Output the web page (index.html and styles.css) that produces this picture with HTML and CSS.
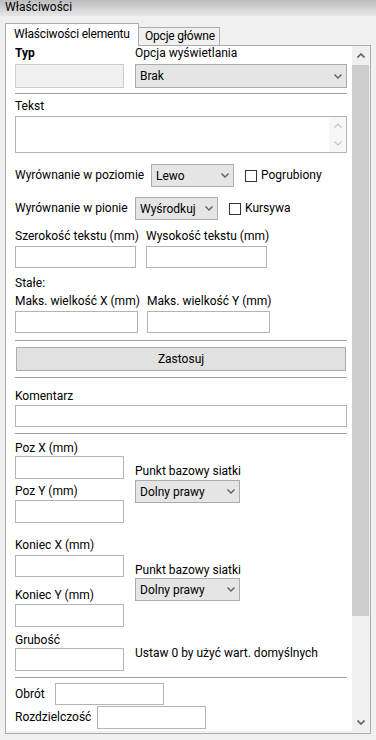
FILE: index.html
```html
<!DOCTYPE html>
<html lang="pl">
<head>
    <meta charset="UTF-8">
    <meta name="viewport" content="width=device-width, initial-scale=1.0">
    <title>Właściwości</title>
    <link rel="stylesheet" href="styles.css">
</head>
<body>
    <div class="titlebar">Właściwości</div>

    <div class="tabs">
        <div class="tab active">Właściwości elementu</div>
        <div class="tab">Opcje główne</div>
    </div>

    <div class="panel">
        <div class="content">
            <div class="grid-top">
                <div class="lbl bold">Typ</div>
                <div class="lbl">Opcja wyświetlania</div>
                <div class="field disabled h24"></div>
                <div class="combo h24">
                    <span>Brak</span>
                    <svg class="chev" width="8" height="5" viewBox="0 0 8 5"><polyline points="0.5,0.5 4,4 7.5,0.5" fill="none" stroke="#606060" stroke-width="1.4"/></svg>
                </div>
            </div>

            <div class="sep s5"></div>

            <div class="lbl mt5">Tekst</div>
            <div class="textarea mt2">
                <div class="mini-scroll">
                    <svg width="8" height="5" viewBox="0 0 8 5"><polyline points="0.5,4.5 4,1 7.5,4.5" fill="none" stroke="#c4c4c4" stroke-width="1.2"/></svg>
                    <svg width="8" height="5" viewBox="0 0 8 5"><polyline points="0.5,0.5 4,4 7.5,0.5" fill="none" stroke="#c4c4c4" stroke-width="1.2"/></svg>
                </div>
            </div>

            <div class="row mt11">
                <div class="lbl w136">Wyrównanie w poziomie</div>
                <div class="combo h23 w83">
                    <span>Lewo</span>
                    <svg class="chev" width="8" height="5" viewBox="0 0 8 5"><polyline points="0.5,0.5 4,4 7.5,0.5" fill="none" stroke="#606060" stroke-width="1.4"/></svg>
                </div>
                <span class="check"></span>
                <span class="check-lbl">Pogrubiony</span>
            </div>

            <div class="row mt10">
                <div class="lbl w120">Wyrównanie w pionie</div>
                <div class="combo h23 w83">
                    <span>Wyśrodkuj</span>
                    <svg class="chev" width="8" height="5" viewBox="0 0 8 5"><polyline points="0.5,0.5 4,4 7.5,0.5" fill="none" stroke="#606060" stroke-width="1.4"/></svg>
                </div>
                <span class="check"></span>
                <span class="check-lbl">Kursywa</span>
            </div>

            <div class="pair pair-a mt9">
                <div class="lbl">Szerokość tekstu (mm)</div>
                <div class="lbl">Wysokość tekstu (mm)</div>
                <div class="field h22"></div>
                <div class="field h22"></div>
            </div>

            <div class="lbl mt8">Stałe:</div>

            <div class="pair pair-b mt3">
                <div class="lbl">Maks. wielkość X (mm)</div>
                <div class="lbl">Maks. wielkość Y (mm)</div>
                <div class="field h22"></div>
                <div class="field h22"></div>
            </div>

            <div class="sep s7"></div>

            <button class="btn">Zastosuj</button>

            <div class="sep s6"></div>

            <div class="lbl mt11">Komentarz</div>
            <div class="field h22 mt1"></div>

            <div class="sep s6"></div>

            <div class="pos mt7">
                <div class="pos-left">
                    <div class="lbl">Poz X (mm)</div>
                    <div class="field h23"></div>
                    <div class="lbl mt5">Poz Y (mm)</div>
                    <div class="field h23 mt1"></div>
                </div>
                <div class="pos-right pt23">
                    <div class="lbl">Punkt bazowy siatki</div>
                    <div class="combo h23 w105 mt1">
                        <span>Dolny prawy</span>
                        <svg class="chev" width="8" height="5" viewBox="0 0 8 5"><polyline points="0.5,0.5 4,4 7.5,0.5" fill="none" stroke="#606060" stroke-width="1.4"/></svg>
                    </div>
                </div>
            </div>

            <div class="pos mt15">
                <div class="pos-left">
                    <div class="lbl">Koniec X (mm)</div>
                    <div class="field h22 mt2"></div>
                    <div class="lbl mt11">Koniec Y (mm)</div>
                    <div class="field h23 mt1"></div>
                </div>
                <div class="pos-right pt25">
                    <div class="lbl">Punkt bazowy siatki</div>
                    <div class="combo h23 w105">
                        <span>Dolny prawy</span>
                        <svg class="chev" width="8" height="5" viewBox="0 0 8 5"><polyline points="0.5,0.5 4,4 7.5,0.5" fill="none" stroke="#606060" stroke-width="1.4"/></svg>
                    </div>
                </div>
            </div>

            <div class="lbl mt6">Grubość</div>
            <div class="note-row">
                <div class="field h23 w109"></div>
                <div class="note">Ustaw 0 by użyć wart. domyślnych</div>
            </div>

            <div class="sep s6"></div>

            <div class="row mt5">
                <div class="lbl">Obrót</div>
                <div class="field h22 w109 ml10"></div>
            </div>
            <div class="row mt1">
                <div class="lbl">Rozdzielczość</div>
                <div class="field h23 w109 ml6"></div>
            </div>
        </div>

        <div class="vscroll">
            <div class="sb-btn up">
                <svg width="8" height="5" viewBox="0 0 8 5"><polyline points="0.5,4.5 4,1 7.5,4.5" fill="none" stroke="#606060" stroke-width="1.6"/></svg>
            </div>
            <div class="sb-thumb"></div>
            <div class="sb-track"></div>
            <div class="sb-btn down">
                <svg width="8" height="5" viewBox="0 0 8 5"><polyline points="0.5,0.5 4,4 7.5,0.5" fill="none" stroke="#606060" stroke-width="1.6"/></svg>
            </div>
        </div>
    </div>
</body>
</html>
```

FILE: styles.css
```css
body {
    margin: 0;
    width: 376px;
    height: 740px;
    overflow: hidden;
    background: #f0f0f0;
    font-family: Roboto, "Segoe UI", sans-serif;
    font-size: 12px;
    color: #000;
}
.titlebar {
    height: 16px;
    padding-left: 5px;
    line-height: 15px;
    background: linear-gradient(#bdbdbd, #e6e6e6);
}
.tabs {
    display: flex;
    align-items: flex-end;
    margin: 7px 0 -1px 5px;
}
.tab {
    box-sizing: border-box;
    height: 19px;
    width: 82px;
    margin-left: -1px;
    padding: 0 0 0 6px;
    line-height: 16px;
    letter-spacing: -0.2px;
    white-space: nowrap;
    border: 1px solid #acacac;
    background: #f0f0f0;
}
.tab.active {
    height: 23px;
    width: 134px;
    margin-left: 0;
    padding: 2px 0 0 8px;
    border-bottom: none;
    background: #fff;
    position: relative;
    z-index: 1;
}
.panel {
    box-sizing: border-box;
    width: 366px;
    height: 689px;
    margin-left: 5px;
    padding: 0 1px 2px 0;
    border: 1px solid #acacac;
    display: flex;
    background: #f0f0f0;
}
.content {
    flex: 1;
    background: #fff;
    padding: 0 5px 0 9px;
    overflow: hidden;
}
.vscroll {
    width: 17px;
    display: flex;
    flex-direction: column;
    background: #f0f0f0;
}
.sb-btn {
    display: flex;
    align-items: center;
    justify-content: center;
}
.sb-btn.up {
    height: 19px;
}
.sb-btn.down {
    height: 17px;
}
.sb-thumb {
    height: 551px;
    background: #cdcdcd;
}
.sb-track {
    flex: 1;
}

/* text */
.lbl {
    line-height: 15px;
    white-space: nowrap;
}
.bold {
    font-weight: bold;
}

/* fields */
.field {
    box-sizing: border-box;
    border: 1px solid #b4b4b4;
    background: #fff;
}
.field.disabled {
    background: #f0f0f0;
    border-color: #cccccc;
}
.combo {
    box-sizing: border-box;
    display: flex;
    align-items: center;
    justify-content: space-between;
    padding: 0 4px 0 4px;
    border: 1px solid #acacac;
    background: #e5e5e5;
    white-space: nowrap;
}
.chev {
    flex-shrink: 0;
}
.textarea {
    box-sizing: border-box;
    height: 37px;
    border: 1px solid #b4b4b4;
    display: flex;
    justify-content: flex-end;
}
.mini-scroll {
    width: 17px;
    background: #f7f7f7;
    display: flex;
    flex-direction: column;
    justify-content: space-between;
    align-items: center;
    padding: 6px 0 6px;
}
.check {
    box-sizing: border-box;
    width: 12px;
    height: 12px;
    margin-left: 11px;
    border: 1px solid #333;
    background: #fff;
}
.check-lbl {
    margin-left: 4px;
    line-height: 15px;
}
.btn {
    display: block;
    box-sizing: border-box;
    width: 330px;
    height: 24px;
    margin: 6px 0 0 1px;
    border: 1px solid #adadad;
    background: #e1e1e1;
    font-family: inherit;
    font-size: 12px;
    color: #000;
    padding: 0;
}
.sep {
    height: 1px;
    background: #a0a0a0;
}

/* layout */
.grid-top {
    display: grid;
    grid-template-columns: 109px 1fr;
    column-gap: 11px;
    row-gap: 3px;
}
.pair {
    display: grid;
    row-gap: 2px;
}
.pair-a {
    grid-template-columns: 121px 121px;
    column-gap: 10px;
}
.pair-b {
    grid-template-columns: 123px 123px;
    column-gap: 9px;
}
.row {
    display: flex;
    align-items: center;
}
.pos {
    display: flex;
    align-items: flex-start;
}
.pos-left {
    width: 109px;
}
.pos-right {
    margin-left: 11px;
}
.note-row {
    display: flex;
    align-items: flex-start;
}
.note {
    margin: -2px 0 0 11px;
    line-height: 15px;
    white-space: nowrap;
}

/* sizes */
.h22 { height: 22px; }
.h23 { height: 23px; }
.h24 { height: 24px; }
.w83 { width: 83px; }
.w105 { width: 105px; }
.w109 { width: 109px; }
.w120 { width: 120px; }
.w136 { width: 136px; }
.ml6 { margin-left: 6px; }
.ml10 { margin-left: 10px; }
.mt1 { margin-top: 1px; }
.mt2 { margin-top: 2px; }
.mt3 { margin-top: 3px; }
.mt5 { margin-top: 5px; }
.mt6 { margin-top: 6px; }
.mt7 { margin-top: 7px; }
.mt8 { margin-top: 8px; }
.mt9 { margin-top: 9px; }
.mt10 { margin-top: 10px; }
.mt11 { margin-top: 11px; }
.mt15 { margin-top: 15px; }
.pt23 { padding-top: 23px; }
.pt25 { padding-top: 25px; }
.s5 { margin-top: 5px; }
.s6 { margin-top: 6px; }
.s7 { margin-top: 7px; }
```
